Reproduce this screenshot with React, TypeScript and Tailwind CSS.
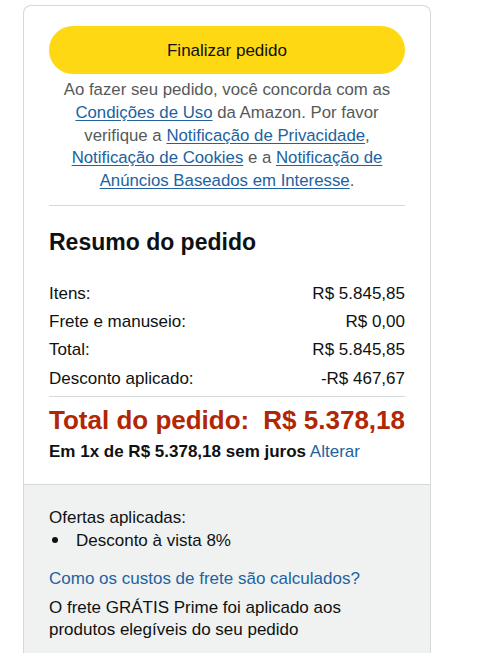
import React from 'react';

const font = { fontFamily: '"Liberation Sans", Arial, sans-serif' };

const rows = [
  { label: 'Itens:', value: 'R$ 5.845,85' },
  { label: 'Frete e manuseio:', value: 'R$ 0,00' },
  { label: 'Total:', value: 'R$ 5.845,85' },
  { label: 'Desconto aplicado:', value: '-R$ 467,67' },
];

function TermLink({ children }: { children: React.ReactNode }) {
  return (
    <a href="#" className="text-[#2162a1] underline decoration-[#2162a1] underline-offset-2">
      {children}
    </a>
  );
}

export default function App() {
  return (
    <div className="min-h-screen bg-white text-[#0f1111] text-[17px] leading-[23px]" style={font}>
      <div className="ml-[23px] mt-[5px] w-[408px] overflow-hidden rounded-t-[8px] border border-b-0 border-[#d5d9d9]">
        {/* checkout */}
        <div className="px-[25px] pt-[20px] pb-[21px]">
          <button className="flex h-[48px] w-full items-center justify-center rounded-full bg-[#ffd814] text-[17px] text-[#0f1111]">
            Finalizar pedido
          </button>
          <p className="mt-[5px] text-center text-[16.8px] leading-[22.75px] text-[#565959]">
            <span>Ao fazer seu pedido, você concorda com as</span>
            <br />
            <TermLink>Condições de Uso</TermLink> <span>da Amazon. Por favor</span>
            <br />
            <span>verifique a</span> <TermLink>Notificação de Privacidade</TermLink>,
            <br />
            <TermLink>Notificação de Cookies</TermLink> <span>e a</span> <TermLink>Notificação de</TermLink>
            <br />
            <TermLink>Anúncios Baseados em Interesse</TermLink>.
          </p>

          <div className="mt-[12px] h-px bg-[#d5d9d9]" />

          <h2 className="mt-[21px] text-[23px] leading-[30px] font-bold">Resumo do pedido</h2>

          <div className="mt-[25px] flex flex-col gap-[5.3px]">
            {rows.map((r) => (
              <div key={r.label} className="flex justify-between">
                <span>{r.label}</span>
                <span>{r.value}</span>
              </div>
            ))}
          </div>

          <div className="mt-[6px] h-px bg-[#d5d9d9]" />

          <div className="mt-[8px] flex justify-between text-[26px] leading-[30px] font-bold text-[#b12704]">
            <span>Total do pedido:</span>
            <span>R$ 5.378,18</span>
          </div>
          <div className="mt-[5px]">
            <span className="font-bold">Em 1x de R$ 5.378,18 sem juros</span>{' '}
            <a href="#" className="text-[#2162a1]">Alterar</a>
          </div>
        </div>

        {/* offers */}
        <div className="border-t border-[#d5d9d9] bg-[#f0f2f2] px-[25px] pt-[21px] pb-[20px]">
          <div>Ofertas aplicadas:</div>
          <div className="flex items-center">
            <span className="ml-[3px] h-[6px] w-[6px] rounded-full bg-[#0f1111]" />
            <span className="ml-[18px]">Desconto à vista 8%</span>
          </div>
          <a href="#" className="mt-[15px] block text-[#2162a1]">Como os custos de frete são calculados?</a>
          <p className="mt-[7px] leading-[22px]">
            O frete GRÁTIS Prime foi aplicado aos
            <br />
            produtos elegíveis do seu pedido
          </p>
        </div>
      </div>
    </div>
  );
}
